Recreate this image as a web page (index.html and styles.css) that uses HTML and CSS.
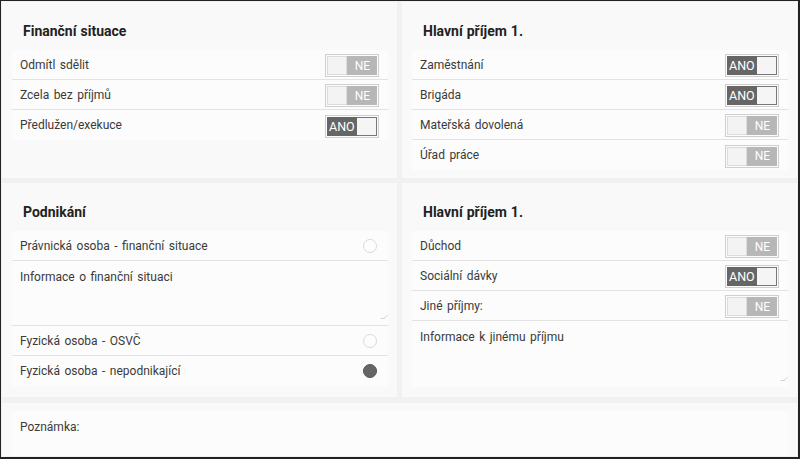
FILE: index.html
```html
<!DOCTYPE html>
<html lang="cs">
<head>
<meta charset="utf-8">
<link rel="stylesheet" href="styles.css">
</head>
<body>
<div class="frame">
  <div class="grid">
    <section class="card">
      <h2 class="title">Finanční situace</h2>
      <div class="list">
        <div class="row"><span>Odmítl sdělit</span><span class="toggle off"><span class="knob"></span><span class="lbl">NE</span></span></div>
        <div class="row"><span>Zcela bez příjmů</span><span class="toggle off"><span class="knob"></span><span class="lbl">NE</span></span></div>
        <div class="row last"><span>Předlužen/exekuce</span><span class="toggle on"><span class="lbl">ANO</span><span class="knob"></span></span></div>
      </div>
    </section>
    <section class="card">
      <h2 class="title">Hlavní příjem 1.</h2>
      <div class="list">
        <div class="row"><span>Zaměstnání</span><span class="toggle on"><span class="lbl">ANO</span><span class="knob"></span></span></div>
        <div class="row"><span>Brigáda</span><span class="toggle on"><span class="lbl">ANO</span><span class="knob"></span></span></div>
        <div class="row"><span>Mateřská dovolená</span><span class="toggle off"><span class="knob"></span><span class="lbl">NE</span></span></div>
        <div class="row last"><span>Úřad práce</span><span class="toggle off"><span class="knob"></span><span class="lbl">NE</span></span></div>
      </div>
    </section>
    <section class="card">
      <h2 class="title">Podnikání</h2>
      <div class="list">
        <div class="row"><span>Právnická osoba - finanční situace</span><span class="radio"></span></div>
        <div class="area"><span>Informace o finanční situaci</span><span class="grip"></span></div>
        <div class="row"><span>Fyzická osoba - OSVČ</span><span class="radio"></span></div>
        <div class="row last"><span>Fyzická osoba - nepodnikající</span><span class="radio checked"></span></div>
      </div>
    </section>
    <section class="card">
      <h2 class="title">Hlavní příjem 1.</h2>
      <div class="list">
        <div class="row"><span>Důchod</span><span class="toggle off"><span class="knob"></span><span class="lbl">NE</span></span></div>
        <div class="row"><span>Sociální dávky</span><span class="toggle on"><span class="lbl">ANO</span><span class="knob"></span></span></div>
        <div class="row"><span>Jiné příjmy:</span><span class="toggle off"><span class="knob"></span><span class="lbl">NE</span></span></div>
        <div class="area tall"><span>Informace k jinému příjmu</span><span class="grip"></span></div>
      </div>
    </section>
  </div>
  <section class="note">
    <div class="note-field">Poznámka:</div>
  </section>
</div>
</body>
</html>
```
FILE: styles.css
```css
* { box-sizing: border-box; }
html, body { margin: 0; padding: 0; }
body {
  width: 800px;
  height: 459px;
  font-family: Roboto, "Noto Sans", sans-serif;
  color: #333;
  background: #f1f1f1;
}
.frame {
  width: 800px;
  height: 459px;
  border: 1px solid #222;
  border-right-width: 2px;
  border-bottom-width: 2px;
  background: #f1f1f1;
  padding: 1px;
  display: flex;
  flex-direction: column;
  gap: 6px;
}
.grid {
  display: grid;
  grid-template-columns: 395px 395px;
  grid-template-rows: 176px 214px;
  column-gap: 5px;
  row-gap: 5px;
}
.card {
  background: #f9f9f9;
  padding: 0 9px 0 10px;
}
.title {
  margin: 0;
  padding: 21px 0 0 11px;
  height: 48px;
  font-size: 14px;
  line-height: 16px;
  font-weight: bold;
  color: #222;
  word-spacing: 0.5px;
}
.list {
  background: #fcfcfc;
}
.row {
  height: 30px;
  display: flex;
  align-items: center;
  justify-content: space-between;
  padding: 0 9px 0 8px;
  border-bottom: 1px solid #e2e2e2;
  font-size: 12px;
  word-spacing: 1.5px;
  color: #3a3a3a;
}
.row.last { border-bottom: none; }
.toggle {
  width: 54px;
  height: 23px;
  border: 1px solid #cfcfcf;
  padding: 1px;
  display: flex;
  margin-top: 2px;
}
.toggle .knob {
  width: 20px;
  background: #f3f3f3;
  border: 1px solid #dcdcdc;
}
.toggle .lbl {
  flex: 1;
  display: flex;
  align-items: center;
  justify-content: center;
  color: #fff;
  font-size: 12px;
  letter-spacing: 0;
}
.toggle.off .lbl {
  background: #b7b7b7;
  font-size: 12px;
  padding-left: 1px;
}
.toggle.on .lbl {
  background: #666;
  justify-content: flex-start;
  padding-left: 2px;
  font-size: 12.5px;
}
.toggle.on .knob { border-color: #777; border-left: none; background: #f5f5f5; }
.radio {
  width: 14px;
  height: 14px;
  border-radius: 50%;
  border: 1px solid #dadada;
  background: #fdfdfd;
  margin-right: 2px;
}
.radio.checked {
  background: #666;
  border-color: #555;
}
.area {
  position: relative;
  height: 65px;
  padding: 9px 8px 0;
  font-size: 12px;
  word-spacing: 1.5px;
  color: #3a3a3a;
  border-bottom: 1px solid #e2e2e2;
}
.area.tall { height: 66px; border-bottom: none; }
.grip {
  position: absolute;
  right: 2px;
  bottom: 6px;
  width: 4px;
  height: 4px;
  border-right: 1px solid #bbb;
  border-bottom: 1px solid #bbb;
  transform: skewX(-45deg);
  opacity: 0.6;
}
.note {
  flex: 1;
  background: #f9f9f9;
  padding: 8px 9px 0 10px;
}
.note-field {
  height: 100%;
  background: #fcfcfc;
  padding: 9px 8px;
  font-size: 12px;
  color: #3a3a3a;
}
```
